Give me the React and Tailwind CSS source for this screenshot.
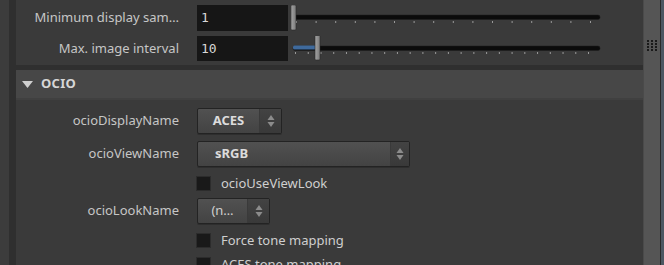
import React from 'react';

const font = { fontFamily: "'Noto Sans', 'Open Sans', sans-serif" };

const Arrows = () => (
    <svg width="8" height="14" viewBox="0 0 8 14">
        <path d="M4 1 L7.5 6 L0.5 6 Z" fill="#8c8c8c" />
        <path d="M4 13 L7.5 8 L0.5 8 Z" fill="#8c8c8c" />
    </svg>
);

const Dropdown = ({ label, width, arrowWidth = 22, align = 'center', bold = true }) => (
    <div
        className="flex h-[26px] rounded-[2px] border border-[#232323] bg-gradient-to-b from-[#515151] to-[#434343] shadow-[0_1px_0_#2e2e2e]"
        style={{ width }}
    >
        <div className={`flex flex-1 items-center text-[13px] ${bold ? 'font-bold text-[#dcdcdc]' : 'text-[#cfcfcf]'} ${align === 'left' ? 'pl-[17px]' : 'justify-center'}`}>
            {label}
        </div>
        <div className="flex items-center justify-center bg-gradient-to-b from-[#434343] to-[#393939] border-l border-[#3a3a3a]" style={{ width: arrowWidth }}>
            <Arrows />
        </div>
    </div>
);

const Slider = ({ ticks, step, start, value }) => (
    <svg width="312" height="26" viewBox="0 0 312 26" className="block">
        <rect x="2" y="10" width="307" height="4.5" rx="2" fill="#0b0b0b" stroke="#1d1d1d" strokeWidth="0.5" />
        {Array.from({ length: ticks }).map((_, k) => (
            <rect key={k} x={start + step * k} y="16" width="1" height="2" fill="#9a9a9a" />
        ))}
        {value > 0 && <rect x="2" y="9.5" width={value} height="4" rx="1.5" fill="#3f6a9c" />}
        <rect x={value} y={value > 0 ? -1 : 0} width="5" height="25" rx="1" fill="url(#hg)" stroke="#2a2a2a" strokeWidth="0.6" />
        <defs>
            <linearGradient id="hg" x1="0" x2="1">
                <stop offset="0" stopColor="#a4a4a4" />
                <stop offset="1" stopColor="#7a7a7a" />
            </linearGradient>
        </defs>
    </svg>
);

const Label = ({ children }) => (
    <div className="w-[164px] shrink-0 pr-[1px] text-right text-[13px] text-[#c6c6c6] whitespace-nowrap">{children}</div>
);

const Checkbox = ({ label }) => (
    <div className="flex h-[15px] items-center">
        <div className="w-[164px] shrink-0" />
        <div className="ml-[16px] w-[15px] h-[15px] bg-[#191919] border border-[#2c2c2c]" />
        <span className="ml-[10px] text-[13px] text-[#cfcfcf]">{label}</span>
    </div>
);

export default function App() {
    return (
        <div className="flex w-[664px] h-[265px] overflow-hidden bg-[#3a3a3a]" style={font}>
            <div className="w-[9px] shrink-0 bg-[#3c3c3c]" />
            <div className="w-[7px] shrink-0 bg-[#2f2f2f]" />

            <div className="flex-1 flex flex-col overflow-hidden">
                {/* Top rows */}
                <div className="h-[65px] shrink-0 pt-[5px] bg-[#3a3a3a]">
                    <div className="flex items-center h-[26px]">
                        <Label>Minimum display sam…</Label>
                        <div className="ml-[17px] w-[91px] h-[26px] bg-[#161616] flex items-center pl-[4px] text-[13px] text-[#d8d8d8]" style={{ fontFamily: "'DejaVu Sans Mono', monospace" }}>1</div>
                        <div className="ml-[3px]">
                            <Slider ticks={16} step={19.6} start={5} value={0} />
                        </div>
                    </div>
                    <div className="flex items-center h-[25px] mt-[5px]">
                        <Label>Max. image interval</Label>
                        <div className="ml-[17px] w-[91px] h-[25px] bg-[#161616] flex items-center pl-[4px] text-[13px] text-[#d8d8d8]" style={{ fontFamily: "'DejaVu Sans Mono', monospace" }}>10</div>
                        <div className="ml-[3px]">
                            <Slider ticks={24} step={12.74} start={4} value={24} />
                        </div>
                    </div>
                </div>
                <div className="h-[5px] shrink-0 bg-[#2f2f2f]" />

                {/* OCIO header */}
                <div className="h-[30px] shrink-0 flex items-center bg-[#474747] border-b-2 border-[#404040]">
                    <svg width="11" height="7" viewBox="0 0 11 7" className="ml-[6px]">
                        <path d="M0 0 L11 0 L5.5 7 Z" fill="#cfcfcf" />
                    </svg>
                    <span className="ml-[8px] text-[13px] font-bold text-[#d6d6d6] tracking-[0.3px]">OCIO</span>
                </div>

                {/* OCIO rows */}
                <div className="flex flex-col shrink-0 pt-[8px]">
                    <div className="flex items-center h-[26px] shrink-0">
                        <Label>ocioDisplayName</Label>
                        <div className="ml-[17px]"><Dropdown label="ACES" width={85} /></div>
                    </div>
                    <div className="flex items-center h-[26px] shrink-0 mt-[7px]">
                        <Label>ocioViewName</Label>
                        <div className="ml-[17px]"><Dropdown label="sRGB" width={213} arrowWidth={19} align="left" /></div>
                    </div>
                    <div className="mt-[9px] shrink-0"><Checkbox label="ocioUseViewLook" /></div>
                    <div className="flex items-center h-[26px] shrink-0 mt-[7px]">
                        <Label>ocioLookName</Label>
                        <div className="ml-[17px]"><Dropdown label="(n…" width={73} bold={false} /></div>
                    </div>
                    <div className="mt-[9px] shrink-0"><Checkbox label="Force tone mapping" /></div>
                    <div className="mt-[9px] shrink-0"><Checkbox label="ACES tone mapping" /></div>
                </div>
            </div>

            {/* scrollbar */}
            <div className="w-[17px] shrink-0 bg-[#555555] border-l border-[#4a4a4a] flex justify-center">
                <div className="mt-[40px] grid grid-cols-3 gap-[1px] h-[11px] w-[11px]">
                    {Array.from({ length: 12 }).map((_, i) => (
                        <div key={i} className="w-[2px] h-[2px] bg-[#1a1a1a]" />
                    ))}
                </div>
            </div>
            <div className="w-[1px] shrink-0 bg-[#2a2a2a]" />
            <div className="w-[3px] shrink-0 bg-[#4c5762]" />
        </div>
    );
}
